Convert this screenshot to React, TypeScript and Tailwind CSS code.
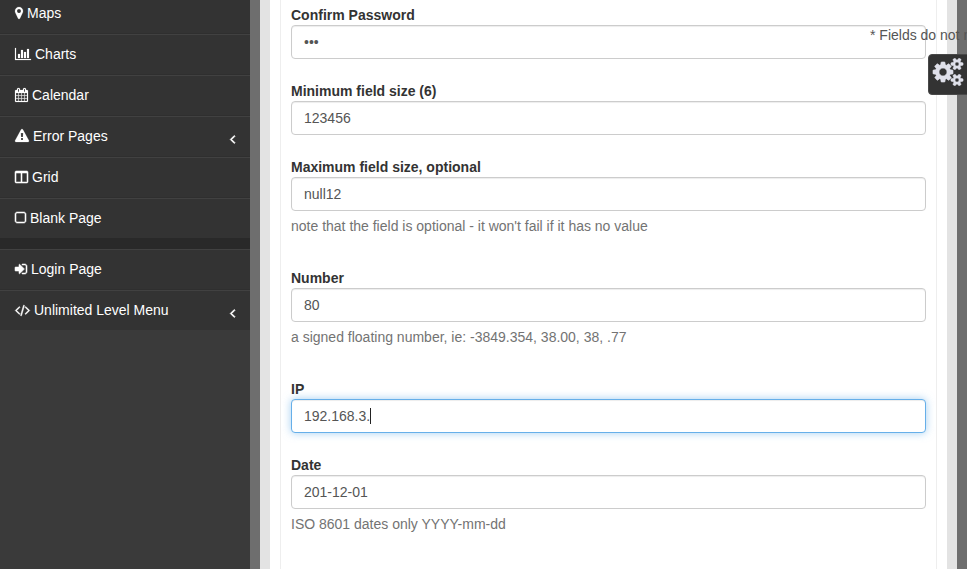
import React from "react";

type Glyph = { w: number; d: string };

const glyphs: Record<string, Glyph> = {
  marker: {
    w: 1024,
    d: "M768 640q0-106-75-181t-181-75-181 75-75 181 75 181 181 75 181-75 75-181zm256 0q0 109-33 179l-364 774q-16 33-47.5 52t-67.5 19-67.5-19-46.5-52l-365-774q-33-70-33-179 0-212 150-362t362-150 362 150 150 362z",
  },
  chart: {
    w: 2048,
    d: "M640 896v512h-256v-512h256zm384-512v1024h-256v-1024h256zm1024 1152v128h-2048v-1536h128v1408h1920zm-640-896v768h-256v-768h256zm384-384v1152h-256v-1152h256z",
  },
  calendar: {
    w: 1664,
    d: "M128 1664h288v-288h-288v288zm352 0h320v-288h-320v288zm-352-352h288v-320h-288v320zm352 0h320v-320h-320v320zm-352-384h288v-288h-288v288zm736 736h320v-288h-320v288zm-384-736h320v-288h-320v288zm768 736h288v-288h-288v288zm-384-352h320v-320h-320v320zm-352-864v-288q0-13-9.5-22.5t-22.5-9.5h-64q-13 0-22.5 9.5t-9.5 22.5v288q0 13 9.5 22.5t22.5 9.5h64q13 0 22.5-9.5t9.5-22.5zm736 864h288v-320h-288v320zm-384-384h320v-288h-320v288zm384 0h288v-288h-288v288zm32-480v-288q0-13-9.5-22.5t-22.5-9.5h-64q-13 0-22.5 9.5t-9.5 22.5v288q0 13 9.5 22.5t22.5 9.5h64q13 0 22.5-9.5t9.5-22.5zm384-64v1280q0 52-38 90t-90 38h-1408q-52 0-90-38t-38-90v-1280q0-52 38-90t90-38h128v-96q0-66 47-113t113-47h64q66 0 113 47t47 113v96h384v-96q0-66 47-113t113-47h64q66 0 113 47t47 113v96h128q52 0 90 38t38 90z",
  },
  warning: {
    w: 1792,
    d: "M1024 1375v-190q0-14-9.5-23.5t-22.5-9.5h-192q-13 0-22.5 9.5t-9.5 23.5v190q0 14 9.5 23.5t22.5 9.5h192q13 0 22.5-9.5t9.5-23.5zm-2-374l18-459q0-12-10-19-13-11-24-11h-220q-11 0-24 11-10 7-10 21l17 457q0 10 10 16.5t24 6.5h185q14 0 23.5-6.5t10.5-16.5zm-14-934l768 1408q35 63-2 126-17 29-46.5 46t-63.5 17h-1536q-34 0-63.5-17t-46.5-46q-37-63-2-126l768-1408q17-31 47-49t65-18 65 18 47 49z",
  },
  columns: {
    w: 1664,
    d: "M160 1536h608v-1152h-640v1120q0 13 9.5 22.5t22.5 9.5zm1376-32v-1120h-640v1152h608q13 0 22.5-9.5t9.5-22.5zm128-1216v1216q0 66-47 113t-113 47h-1344q-66 0-113-47t-47-113v-1216q0-66 47-113t113-47h1344q66 0 113 47t47 113z",
  },
  square: {
    w: 1408,
    d: "M1120 256h-832q-66 0-113 47t-47 113v832q0 66 47 113t113 47h832q66 0 113-47t47-113v-832q0-66-47-113t-113-47zm288 160v832q0 119-84.5 203.5t-203.5 84.5h-832q-119 0-203.5-84.5t-84.5-203.5v-832q0-119 84.5-203.5t203.5-84.5h832q119 0 203.5 84.5t84.5 203.5z",
  },
  signIn: {
    w: 1536,
    d: "M1184 896q0 26-19 45l-544 544q-19 19-45 19t-45-19-19-45v-288h-448q-26 0-45-19t-19-45v-384q0-26 19-45t45-19h448v-288q0-26 19-45t45-19 45 19l544 544q19 19 19 45zm352-352v704q0 119-84.5 203.5t-203.5 84.5h-320q-13 0-22.5-9.5t-9.5-22.5q0-4-1-20t-.5-26.5 3-23.5 10-19.5 20.5-6.5h320q66 0 113-47t47-113v-704q0-66-47-113t-113-47h-312l-11.5-1-11.5-3-8-5.5-7-9-2-13.5q0-4-1-20t-.5-26.5 3-23.5 10-19.5 20.5-6.5h320q119 0 203.5 84.5t84.5 203.5z",
  },
  code: {
    w: 1920,
    d: "M617 1399l-50 50q-10 10-23 10t-23-10l-466-466q-10-10-10-23t10-23l466-466q10-10 23-10t23 10l50 50q10 10 10 23t-10 23l-393 393 393 393q10 10 10 23t-10 23zm591-1067l-373 1291q-4 13-15.5 19.5t-23.5 2.5l-62-17q-13-4-19.5-15.5t-2.5-24.5l373-1291q4-13 15.5-19.5t23.5-2.5l62 17q13 4 19.5 15.5t2.5 24.5zm657 651l-466 466q-10 10-23 10t-23-10l-50-50q-10-10-10-23t10-23l393-393-393-393q-10-10-10-23t10-23l50-50q10-10 23-10t23 10l466 466q10 10 10 23t-10 23z",
  },
  angle: {
    w: 640,
    d: "M627 544q0 13-10 23l-393 393 393 393q10 10 10 23t-10 23l-50 50q-10 10-23 10t-23-10l-466-466q-10-10-10-23t10-23l466-466q10-10 23-10t23 10l50 50q10 10 10 23z",
  },
  cogs: {
    w: 1920,
    d: "M896 896q0-106-75-181t-181-75-181 75-75 181 75 181 181 75 181-75 75-181zm768 512q0-52-38-90t-90-38-90 38-38 90q0 53 37.5 90.5t90.5 37.5 90.5-37.5 37.5-90.5zm0-1024q0-52-38-90t-90-38-90 38-38 90q0 53 37.5 90.5t90.5 37.5 90.5-37.5 37.5-90.5zm-384 421v185q0 10-7 19.5t-16 10.5l-155 24q-11 35-32 76 34 48 90 115 7 11 7 20 0 12-7 19-23 30-82.5 89.5t-78.5 59.5q-11 0-21-7l-115-90q-37 19-77 31-11 108-23 155-7 24-30 24h-186q-11 0-20-7.5t-10-17.5l-23-153q-34-10-75-31l-118 89q-7 7-20 7-11 0-21-8-144-133-144-160 0-9 7-19 10-14 41-53t47-61q-23-44-35-82l-152-24q-10-1-17-9.5t-7-19.5v-185q0-10 7-19.5t16-10.5l155-24q11-35 32-76-34-48-90-115-7-11-7-20 0-12 7-20 22-30 82-89t79-59q11 0 21 7l115 90q34-18 77-32 11-108 23-154 7-24 30-24h186q11 0 20 7.5t10 17.5l23 153q34 10 75 31l118-89q8-7 20-7 11 0 21 8 144 133 144 160 0 8-7 19-12 16-42 54t-45 60q23 48 34 82l152 23q10 2 17 10.5t7 19.5zm640 533v140q0 16-149 31-12 27-30 52 51 113 51 138 0 4-4 7-122 71-124 71-8 0-46-47t-52-68q-20 2-30 2t-30-2q-14 21-52 68t-46 47q-2 0-124-71-4-3-4-7 0-25 51-138-18-25-30-52-149-15-149-31v-140q0-16 149-31 13-29 30-52-51-113-51-138 0-4 4-7 4-2 35-20t59-34 30-16q8 0 46 46.5t52 67.5q20-2 30-2t30 2q51-71 92-112l6-2q4 0 124 70 4 3 4 7 0 25-51 138 17 23 30 52 149 15 149 31zm0-1024v140q0 16-149 31-12 27-30 52 51 113 51 138 0 4-4 7-122 71-124 71-8 0-46-47t-52-68q-20 2-30 2t-30-2q-14 21-52 68t-46 47q-2 0-124-71-4-3-4-7 0-25 51-138-18-25-30-52-149-15-149-31v-140q0-16 149-31 13-29 30-52-51-113-51-138 0-4 4-7 4-2 35-20t59-34 30-16q8 0 46 46.5t52 67.5q20-2 30-2t30 2q51-71 92-112l6-2q4 0 124 70 4 3 4 7 0 25-51 138 17 23 30 52 149 15 149 31z",
  },
};

function Icon({ name, className }: { name: string; className: string }) {
  const g = glyphs[name];
  return (
    <svg viewBox={`0 0 ${g.w} 1792`} className={`w-auto shrink-0 overflow-visible fill-current stroke-current ${className}`}>
      <path d={g.d} />
    </svg>
  );
}

type Item = { icon: string; label: string; nested?: boolean };

const mainItems: Item[] = [
  { icon: "marker", label: "Maps" },
  { icon: "chart", label: "Charts" },
  { icon: "calendar", label: "Calendar" },
  { icon: "warning", label: "Error Pages", nested: true },
  { icon: "columns", label: "Grid" },
  { icon: "square", label: "Blank Page" },
];

const extraItems: Item[] = [
  { icon: "signIn", label: "Login Page" },
  { icon: "code", label: "Unlimited Level Menu", nested: true },
];

function MenuItem({ icon, label, nested }: Item) {
  const thin = icon === "columns" || icon === "square" || icon === "code" || icon === "signIn";
  return (
    <li className="h-[41px] border-t border-[#414141] bg-[#333] pr-[15px] pl-[15px] shadow-[inset_0_-1px_0_#2f2f2f] last:h-10 last:shadow-none">
      <div className="flex h-[38px] items-center">
        <Icon name={icon} className={`h-3.5 ${thin ? "stroke-[70]" : "stroke-[24]"}`} />
        <span className="ml-1">{label}</span>
        {nested && <Icon name="angle" className="mt-[5px] ml-auto h-3.5 stroke-[110]" />}
      </div>
    </li>
  );
}

type FieldProps = { label: string; value: string; help?: string; focused?: boolean };

const fields: FieldProps[] = [
  { label: "Confirm Password", value: "•••" },
  { label: "Minimum field size (6)", value: "123456" },
  { label: "Maximum field size, optional", value: "null12", help: "note that the field is optional - it won't fail if it has no value" },
  { label: "Number", value: "80", help: "a signed floating number, ie: -3849.354, 38.00, 38, .77" },
  { label: "IP", value: "192.168.3.", focused: true },
  { label: "Date", value: "201-12-01", help: "ISO 8601 dates only YYYY-mm-dd" },
];

function Field({ label, value, help, focused }: FieldProps) {
  return (
    <div className={help ? "mb-8" : "mb-[22px]"}>
      <div className="font-bold text-[#333]">{label}</div>
      <div
        className={`flex h-[34px] items-center rounded-[4px] border bg-white px-3 text-[#555] ${
          focused
            ? "border-[#66afe9] shadow-[inset_0_1px_1px_rgba(0,0,0,.075),0_0_8px_rgba(102,175,233,.6)]"
            : "border-[#ccc] shadow-[inset_0_1px_1px_rgba(0,0,0,.075)]"
        }`}
      >
        {value}
        {focused && <span className="h-4 w-px bg-[#222]" />}
      </div>
      {help && <div className="mt-[5px] text-[#737373]">{help}</div>}
    </div>
  );
}

export default function App() {
  return (
    <div className="h-[569px] w-[979px] overflow-hidden bg-white font-['Liberation_Sans',Arial,sans-serif] text-sm leading-5">
      <div className="relative flex h-full w-[967px] overflow-hidden">
        <nav className="h-full w-[250px] shrink-0 bg-[#3a3a3a] text-white">
          <ul className="-mt-[7px]">
            {mainItems.map((item) => (
              <MenuItem key={item.label} {...item} />
            ))}
          </ul>
          <div className="h-[11px] bg-[#292929]" />
          <ul>
            {extraItems.map((item) => (
              <MenuItem key={item.label} {...item} />
            ))}
          </ul>
        </nav>
        <main className="flex-1 border-x-[10px] border-[#6e6e6e]">
          <div className="h-full border-x-[10px] border-[#e3e3e3] px-2.5">
            <form className="h-full border-x border-[#eee] px-2.5 pt-[5px]">
              {fields.map((field) => (
                <Field key={field.label} {...field} />
              ))}
            </form>
          </div>
        </main>
        <div className="absolute top-[25px] left-[870px] whitespace-nowrap text-[#555]">* Fields do not m</div>
        <div className="absolute top-[54px] left-[928px] flex h-[41px] w-[45px] rounded-l-[4px] border border-[#484848] bg-[#333] pt-[3px] pl-1 text-[#dfe0ea]">
          <Icon name="cogs" className="h-7 stroke-[40]" />
        </div>
      </div>
    </div>
  );
}
